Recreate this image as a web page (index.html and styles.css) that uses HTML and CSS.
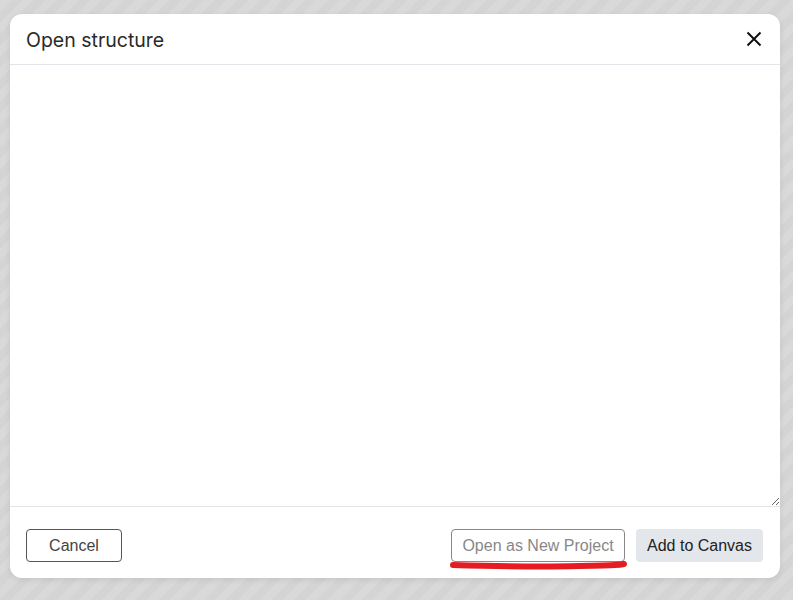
FILE: index.html
```html
<!DOCTYPE html>
<html>
<head>
<meta charset="utf-8">
<link rel="stylesheet" href="styles.css">
</head>
<body>
<div class="dialog">
  <div class="header">
    <div class="title">Open structure</div>
    <button class="close" aria-label="Close">
      <svg width="16" height="16" viewBox="0 0 16 16"><path d="M1.5 1.5 L14.5 14.5 M14.5 1.5 L1.5 14.5" stroke="#111" stroke-width="2" fill="none"/></svg>
    </button>
  </div>
  <div class="body">
    <textarea class="input"></textarea>
  </div>
  <div class="footer">
    <button class="btn cancel">Cancel</button>
    <div class="right">
      <div class="marked">
        <button class="btn outline">Open as New Project</button>
        <svg class="underline" width="180" height="10" viewBox="0 0 180 10"><path d="M4 5 C40 6, 90 7, 130 6 S170 5, 175 4" stroke="#e51c23" stroke-width="6" stroke-linecap="round" fill="none"/></svg>
      </div>
      <button class="btn primary">Add to Canvas</button>
    </div>
  </div>
</div>
</body>
</html>
```
FILE: styles.css
```css
html, body {
  margin: 0;
  height: 100%;
}
body {
  background: repeating-linear-gradient(135deg, #d9d9d9 0px, #d9d9d9 8px, #d4d4d4 8px, #d4d4d4 16px);
  padding: 14px 13px 22px 10px;
  box-sizing: border-box;
  font-family: Inter, "Liberation Sans", sans-serif;
}
.dialog {
  background: #fff;
  border-radius: 12px;
  height: 564px;
  display: flex;
  flex-direction: column;
  box-shadow: 0 2px 6px rgba(0,0,0,0.08);
}
.header {
  height: 50px;
  border-bottom: 1px solid #e2e5ea;
  display: flex;
  align-items: center;
  justify-content: space-between;
  padding: 0 18px 0 16px;
}
.title {
  font-size: 19.5px;
  color: #2a2a2a;
  font-weight: 400;
  padding-top: 1px;
}
.close {
  background: none;
  border: none;
  padding: 0;
  width: 16px;
  height: 16px;
  display: flex;
}
.body {
  flex: 1;
  display: flex;
}
.input {
  flex: 1;
  border: none;
  outline: none;
  margin: 0;
  padding: 8px;
  resize: vertical;
  background: #fff;
}
.footer {
  height: 72px;
  border-top: 1px solid #e2e5ea;
  display: flex;
  align-items: flex-start;
  justify-content: space-between;
  padding: 22px 17px 0 16px;
  box-sizing: border-box;
}
.right {
  display: flex;
  gap: 11px;
}
.btn {
  font-family: "Liberation Sans", Arial, sans-serif;
  font-size: 16px;
  height: 33px;
  border-radius: 4px;
  padding: 0 8px;
  box-sizing: border-box;
}
.cancel {
  width: 96px;
  background: #fff;
  border: 1px solid #555;
  color: #444;
}
.marked {
  position: relative;
}
.outline {
  width: 174px;
  background: #fff;
  border: 1px solid #888;
  color: #888;
}
.underline {
  position: absolute;
  left: -2px;
  top: 31px;
}
.primary {
  width: 127px;
  background: #e3e6ea;
  border: none;
  color: #222;
}
```
